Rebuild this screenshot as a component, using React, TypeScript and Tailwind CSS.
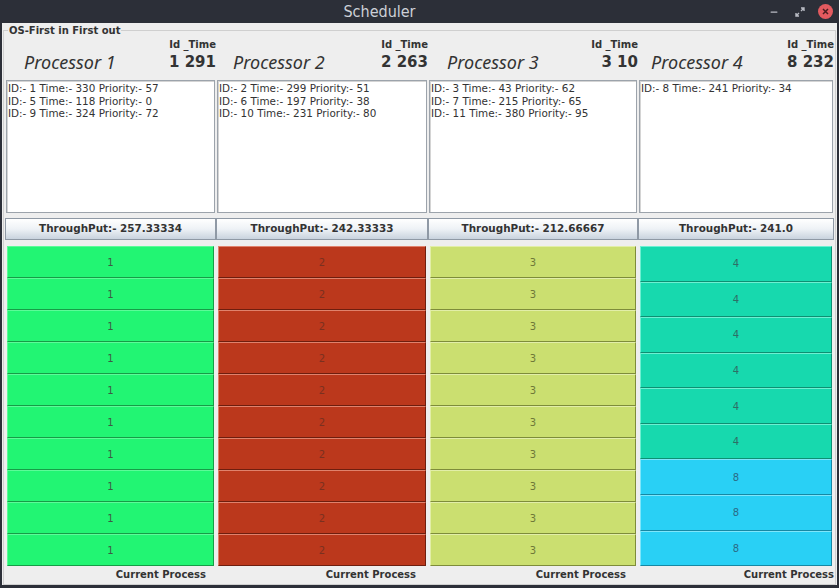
import { Minus } from "lucide-react";

type Cell = { label: string; tone: keyof typeof tones };

const tones = {
  green: "bg-[#22f573] border-t-[#5cfb98] border-l-[#5cfb98] border-b-[#169c47] border-r-[#169c47] text-[#3d5a45]",
  red: "bg-[#bb381c] border-t-[#e0826c] border-l-[#e0826c] border-b-[#6e1e0e] border-r-[#6e1e0e] text-[#7a3020]",
  lime: "bg-[#cbdf70] border-t-[#e2eea8] border-l-[#e2eea8] border-b-[#7e8c3a] border-r-[#7e8c3a] text-[#6e7838]",
  teal: "bg-[#17d9ae] border-t-[#6df0d2] border-l-[#6df0d2] border-b-[#0e8f73] border-r-[#0e8f73] text-[#2f6e66]",
  cyan: "bg-[#29d0f5] border-t-[#7ee6fb] border-l-[#7ee6fb] border-b-[#1688a4] border-r-[#1688a4] text-[#2b6a86]",
};

const processors = [
  {
    name: "Processor 1",
    current: "1 291",
    jobs: ["ID:- 1 Time:- 330 Priority:- 57", "ID:- 5 Time:- 118 Priority:- 0", "ID:- 9 Time:- 324 Priority:- 72"],
    throughput: "ThroughPut:- 257.33334",
    cells: Array.from({ length: 10 }, (): Cell => ({ label: "1", tone: "green" })),
    pad: "pl-[19px]",
    labelPad: "pr-[10px]",
  },
  {
    name: "Processor 2",
    current: "2 263",
    jobs: ["ID:- 2 Time:- 299 Priority:- 51", "ID:- 6 Time:- 197 Priority:- 38", "ID:- 10 Time:- 231 Priority:- 80"],
    throughput: "ThroughPut:- 242.33333",
    cells: Array.from({ length: 10 }, (): Cell => ({ label: "2", tone: "red" })),
    pad: "pl-[17px]",
    labelPad: "pr-[12px]",
  },
  {
    name: "Processor 3",
    current: "3 10",
    jobs: ["ID:- 3 Time:- 43 Priority:- 62", "ID:- 7 Time:- 215 Priority:- 65", "ID:- 11 Time:- 380 Priority:- 95"],
    throughput: "ThroughPut:- 212.66667",
    cells: Array.from({ length: 10 }, (): Cell => ({ label: "3", tone: "lime" })),
    pad: "pl-[19px]",
    labelPad: "pr-[12px]",
  },
  {
    name: "Processor 4",
    current: "8 232",
    jobs: ["ID:- 8 Time:- 241 Priority:- 34"],
    throughput: "ThroughPut:- 241.0",
    cells: [
      ...Array.from({ length: 6 }, (): Cell => ({ label: "4", tone: "teal" })),
      ...Array.from({ length: 3 }, (): Cell => ({ label: "8", tone: "cyan" })),
    ],
    pad: "pl-[13px]",
    labelPad: "pr-0",
  },
];

function ProcessorColumn({ p }: { p: (typeof processors)[number] }) {
  return (
    <div className="flex flex-col min-w-0">
      {/* header */}
      <div className="h-[47px] flex flex-col pt-[5px]">
        <div className="text-right text-[10px] font-bold leading-[14px] text-[#333]">Id _Time</div>
        <div className={`flex items-center justify-between -mt-px ${p.pad}`}>
          <span className="italic text-[18px] leading-[22px] text-[#333] font-['Noto_Sans',sans-serif]">{p.name}</span>
          <span className="text-[15px] font-bold leading-[20px] text-[#333]">{p.current}</span>
        </div>
      </div>

      {/* job list */}
      <div className="h-[133px] mx-px bg-white border border-[#9ca3ab] shadow-[inset_1px_1px_0_#d4d4d4] px-[1px] pt-[1px] text-[10.4px] leading-[12.5px] text-[#333]">
        {p.jobs.map((j) => (
          <div key={j}>{j}</div>
        ))}
      </div>

      {/* throughput */}
      <div className="mt-[5px] h-[22px] border border-[#8f99a5] bg-gradient-to-b from-[#ffffff] via-[#eef2f6] to-[#c9d3de] flex items-center justify-center text-[10.4px] font-bold text-[#333]">
        {p.throughput}
      </div>

      {/* process queue */}
      <div className="mt-[5px] h-[322px] flex flex-col px-[2px] py-px">
        {p.cells.map((c, i) => (
          <div
            key={i}
            className={`flex-1 flex items-center justify-center border text-[10px] ${tones[c.tone]}`}
          >
            {c.label}
          </div>
        ))}
      </div>

      <div className={`text-right text-[10px] font-bold leading-[16px] text-[#333] ${p.labelPad}`}>Current Process</div>
    </div>
  );
}

export default function App() {
  return (
    <div className="w-[839px] h-[588px] bg-[#2c2f38] flex flex-col font-['DejaVu_Sans',sans-serif] overflow-hidden">
      {/* title bar */}
      <div className="h-[23px] flex items-center relative shrink-0">
        <div className="flex-1 text-center pr-[80px] text-[16px] text-[#cdd0d7] font-['DejaVu_Sans_Condensed','DejaVu_Sans',sans-serif]">
          Scheduler
        </div>
        <div className="absolute right-[6px] top-[4px] flex items-center">
          <Minus size={10} strokeWidth={3} className="text-[#b9bcc4]" />
          <svg width="10" height="10" viewBox="0 0 10 10" className="ml-[16px] text-[#b9bcc4]">
            <path d="M6 1h3v3M4 9H1V6M9 1L6 4M1 9l3-3" stroke="currentColor" strokeWidth="1.4" fill="none" />
          </svg>
          <div className="ml-[13px] w-[15px] h-[15px] rounded-full bg-[#e35a5f] flex items-center justify-center">
            <svg width="7" height="7" viewBox="0 0 7 7">
              <path d="M1 1l5 5M6 1L1 6" stroke="#4a1d20" strokeWidth="1.5" />
            </svg>
          </div>
        </div>
      </div>

      {/* window body */}
      <div className="flex-1 mx-[2px] mb-[3px] bg-[#eeeeee] pt-px">
        <fieldset className="h-full mx-px border border-[#cfcfcf] px-px pb-0">
          <legend className="ml-[3px] px-[1px] text-[10px] font-bold leading-[13px] text-[#333]">OS-First in First out</legend>
          <div className="grid grid-cols-[211px_212px_210px_196px] -mt-[4px]">
            {processors.map((p) => (
              <ProcessorColumn key={p.name} p={p} />
            ))}
          </div>
        </fieldset>
      </div>
    </div>
  );
}
